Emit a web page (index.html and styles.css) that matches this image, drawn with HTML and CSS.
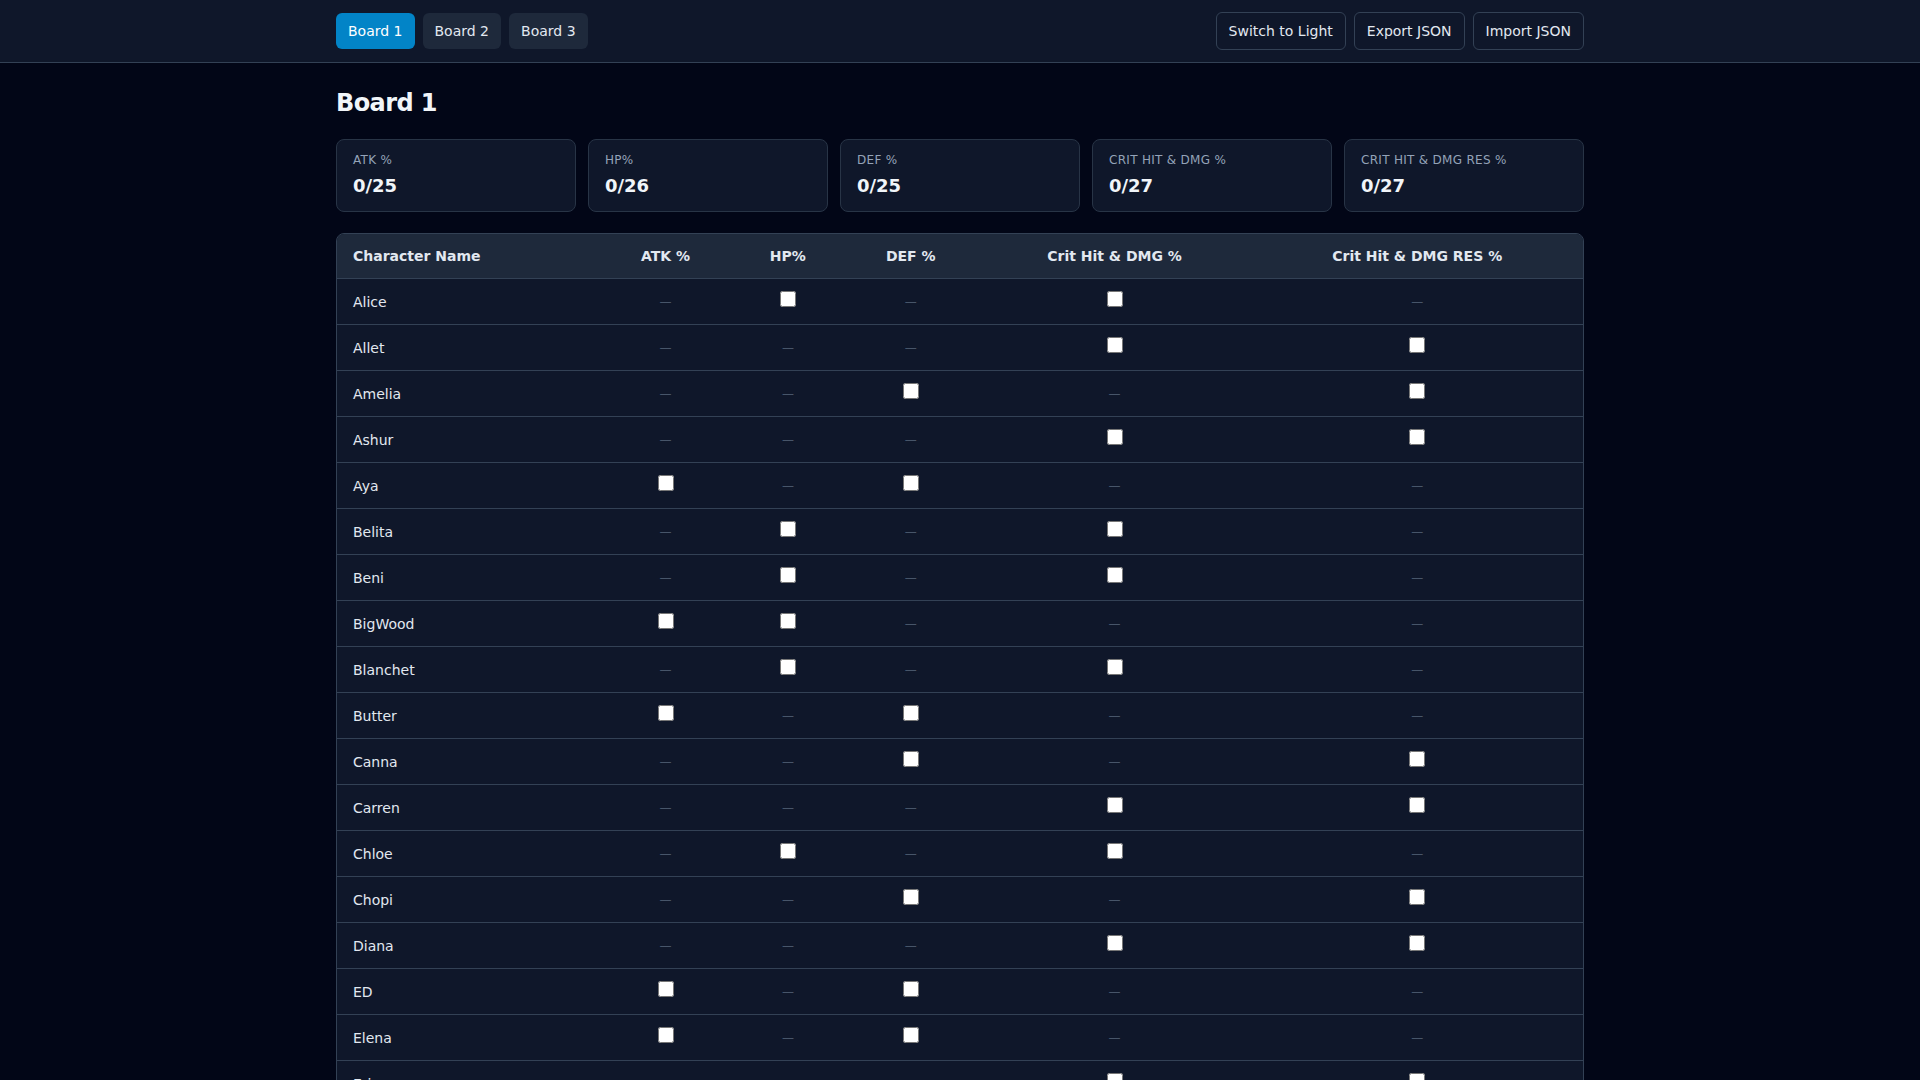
FILE: index.html
```html
<!DOCTYPE html>
<html lang="en">
<head>
<meta charset="utf-8">
<title>Board 1</title>
<link rel="stylesheet" href="styles.css">
</head>
<body>
<header class="topbar">
  <div class="container topbar-inner">
    <nav class="tabs">
      <button class="tab active">Board 1</button>
      <button class="tab">Board 2</button>
      <button class="tab">Board 3</button>
    </nav>
    <div class="actions">
      <button class="btn">Switch to Light</button>
      <button class="btn">Export JSON</button>
      <button class="btn">Import JSON</button>
    </div>
  </div>
</header>
<main class="container main">
  <h1 class="title">Board 1</h1>
  <section class="stats">
    <div class="stat"><div class="stat-label">ATK %</div><div class="stat-value">0/25</div></div>
    <div class="stat"><div class="stat-label">HP%</div><div class="stat-value">0/26</div></div>
    <div class="stat"><div class="stat-label">DEF %</div><div class="stat-value">0/25</div></div>
    <div class="stat"><div class="stat-label">Crit Hit &amp; DMG %</div><div class="stat-value">0/27</div></div>
    <div class="stat"><div class="stat-label">Crit Hit &amp; DMG RES %</div><div class="stat-value">0/27</div></div>
  </section>
  <div class="table-wrap">
    <table class="grid">
      <thead>
        <tr>
          <th class="name-col">Character Name</th>
          <th>ATK %</th>
          <th>HP%</th>
          <th>DEF %</th>
          <th>Crit Hit &amp; DMG %</th>
          <th>Crit Hit &amp; DMG RES %</th>
        </tr>
      </thead>
      <tbody>
        <tr><td class="name">Alice</td><td><span class="dash">—</span></td><td><input type="checkbox"></td><td><span class="dash">—</span></td><td><input type="checkbox"></td><td><span class="dash">—</span></td></tr>
        <tr><td class="name">Allet</td><td><span class="dash">—</span></td><td><span class="dash">—</span></td><td><span class="dash">—</span></td><td><input type="checkbox"></td><td><input type="checkbox"></td></tr>
        <tr><td class="name">Amelia</td><td><span class="dash">—</span></td><td><span class="dash">—</span></td><td><input type="checkbox"></td><td><span class="dash">—</span></td><td><input type="checkbox"></td></tr>
        <tr><td class="name">Ashur</td><td><span class="dash">—</span></td><td><span class="dash">—</span></td><td><span class="dash">—</span></td><td><input type="checkbox"></td><td><input type="checkbox"></td></tr>
        <tr><td class="name">Aya</td><td><input type="checkbox"></td><td><span class="dash">—</span></td><td><input type="checkbox"></td><td><span class="dash">—</span></td><td><span class="dash">—</span></td></tr>
        <tr><td class="name">Belita</td><td><span class="dash">—</span></td><td><input type="checkbox"></td><td><span class="dash">—</span></td><td><input type="checkbox"></td><td><span class="dash">—</span></td></tr>
        <tr><td class="name">Beni</td><td><span class="dash">—</span></td><td><input type="checkbox"></td><td><span class="dash">—</span></td><td><input type="checkbox"></td><td><span class="dash">—</span></td></tr>
        <tr><td class="name">BigWood</td><td><input type="checkbox"></td><td><input type="checkbox"></td><td><span class="dash">—</span></td><td><span class="dash">—</span></td><td><span class="dash">—</span></td></tr>
        <tr><td class="name">Blanchet</td><td><span class="dash">—</span></td><td><input type="checkbox"></td><td><span class="dash">—</span></td><td><input type="checkbox"></td><td><span class="dash">—</span></td></tr>
        <tr><td class="name">Butter</td><td><input type="checkbox"></td><td><span class="dash">—</span></td><td><input type="checkbox"></td><td><span class="dash">—</span></td><td><span class="dash">—</span></td></tr>
        <tr><td class="name">Canna</td><td><span class="dash">—</span></td><td><span class="dash">—</span></td><td><input type="checkbox"></td><td><span class="dash">—</span></td><td><input type="checkbox"></td></tr>
        <tr><td class="name">Carren</td><td><span class="dash">—</span></td><td><span class="dash">—</span></td><td><span class="dash">—</span></td><td><input type="checkbox"></td><td><input type="checkbox"></td></tr>
        <tr><td class="name">Chloe</td><td><span class="dash">—</span></td><td><input type="checkbox"></td><td><span class="dash">—</span></td><td><input type="checkbox"></td><td><span class="dash">—</span></td></tr>
        <tr><td class="name">Chopi</td><td><span class="dash">—</span></td><td><span class="dash">—</span></td><td><input type="checkbox"></td><td><span class="dash">—</span></td><td><input type="checkbox"></td></tr>
        <tr><td class="name">Diana</td><td><span class="dash">—</span></td><td><span class="dash">—</span></td><td><span class="dash">—</span></td><td><input type="checkbox"></td><td><input type="checkbox"></td></tr>
        <tr><td class="name">ED</td><td><input type="checkbox"></td><td><span class="dash">—</span></td><td><input type="checkbox"></td><td><span class="dash">—</span></td><td><span class="dash">—</span></td></tr>
        <tr><td class="name">Elena</td><td><input type="checkbox"></td><td><span class="dash">—</span></td><td><input type="checkbox"></td><td><span class="dash">—</span></td><td><span class="dash">—</span></td></tr>
        <tr><td class="name">Erica</td><td><span class="dash">—</span></td><td><span class="dash">—</span></td><td><span class="dash">—</span></td><td><input type="checkbox"></td><td><input type="checkbox"></td></tr>
      </tbody>
    </table>
  </div>
</main>
</body>
</html>
```

FILE: styles.css
```css
* { box-sizing: border-box; }

html, body {
  margin: 0;
  padding: 0;
  background: #020617;
  color: #e2e8f0;
  font-family: "DejaVu Sans", "Liberation Sans", sans-serif;
  font-size: 14px;
  line-height: 20px;
}

.container {
  max-width: 1280px;
  margin: 0 auto;
  padding-left: 16px;
  padding-right: 16px;
}

.topbar {
  background: #0f172a;
  border-bottom: 1px solid #334155;
}

.topbar-inner {
  display: flex;
  align-items: center;
  justify-content: space-between;
  padding-top: 12px;
  padding-bottom: 12px;
}

.tabs, .actions {
  display: flex;
  gap: 8px;
  align-items: center;
}

button {
  font-family: inherit;
  font-size: 14px;
  line-height: 20px;
  margin: 0;
  cursor: pointer;
}

.tab {
  padding: 8px 12px;
  border: none;
  border-radius: 6px;
  background: #1e293b;
  color: #e2e8f0;
}

.tab.active {
  background: #0284c7;
  color: #ffffff;
}

.btn {
  padding: 8px 12px;
  border: 1px solid #334155;
  border-radius: 6px;
  background: #0f172a;
  color: #e2e8f0;
}

.main {
  padding-top: 24px;
  padding-bottom: 24px;
}

.title {
  margin: 0 0 20px;
  font-size: 24px;
  line-height: 32px;
  font-weight: 700;
  letter-spacing: -0.025em;
  color: #f1f5f9;
}

.stats {
  display: grid;
  grid-template-columns: repeat(5, 1fr);
  gap: 12px;
  margin-bottom: 21px;
}

.stat {
  background: #0f172a;
  border: 1px solid #283446;
  border-radius: 8px;
  padding: 12px 16px 11px;
}

.stat-label {
  font-size: 12px;
  line-height: 16px;
  text-transform: uppercase;
  letter-spacing: 0.025em;
  color: #94a3b8;
}

.stat-value {
  margin-top: 4px;
  font-size: 18px;
  line-height: 28px;
  font-weight: 700;
  color: #f1f5f9;
}

.table-wrap {
  border: 1px solid #334155;
  border-radius: 8px;
  overflow: hidden;
  background: #0f172a;
}

.grid {
  width: 100%;
  border-collapse: collapse;
}

.grid th {
  background: #1e293b;
  padding: 12px 16px;
  font-weight: 700;
  font-size: 14px;
  line-height: 20px;
  color: #e2e8f0;
  text-align: center;
  border-bottom: 1px solid #334155;
  white-space: nowrap;
}

.grid th.name-col {
  text-align: left;
}

.grid td {
  padding: 12px 16px;
  text-align: center;
  border-bottom: 1px solid #334155;
  white-space: nowrap;
}

.grid tbody tr:last-child td {
  border-bottom: none;
}

.grid td.name {
  text-align: left;
  color: #e2e8f0;
}

.grid input[type="checkbox"] {
  width: 16px;
  height: 16px;
  margin: 0;
}

.dash {
  color: #475569;
  font-size: 12px;
}
```
